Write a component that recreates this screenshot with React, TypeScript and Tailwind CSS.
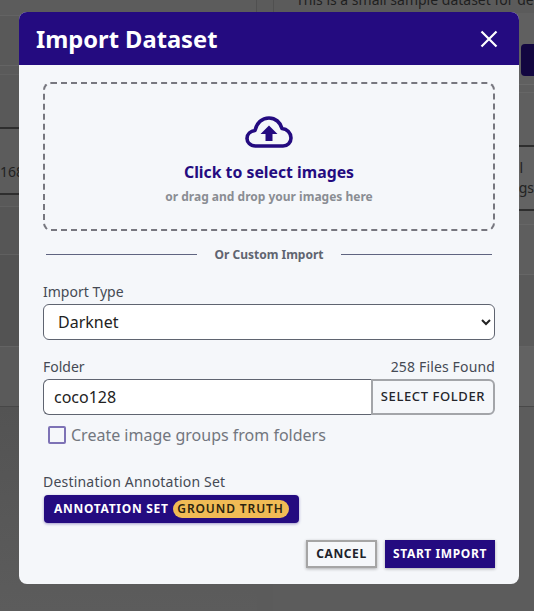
import React from "react";

const font = { fontFamily: '"Noto Sans", "Open Sans", sans-serif' };

function Backdrop() {
  return (
    <div className="flex h-full w-full bg-[#5b5b5b]">
      <div className="flex w-[257px] shrink-0 flex-col">
        <div className="h-[16px] border-b border-r border-b-[#636363] border-r-[#505050] bg-[#5c5c5c]" />
        <div className="h-[50px] border-b border-b-[#646464] bg-[#595959]" />
        <div className="h-[9px] border-b border-b-[#606060] bg-[#5a5a5a]" />
        <div className="h-[54px] border-b-2 border-b-[#2e2e2e] bg-[#595959]" />
        <div className="flex h-[66px] items-center border-b-2 border-b-[#2e2e2e] bg-[#5c5c5c] pt-[20px] text-[14px] text-[#222]">168</div>
        <div className="h-[12px] border-b border-b-[#606060] bg-[#595959]" />
        <div className="h-[48px] border-b border-b-[#606060] bg-[#565656]" />
        <div className="h-[92px] border-b border-b-[#636363] bg-[#535353]" />
        <div className="h-[60px] border-b border-b-[#474747] bg-[#5a5a5a]" />
        <div className="flex-1 bg-linear-to-b from-[#535353] to-[#5c5c5c]" />
      </div>
      <div className="w-[16px] shrink-0" />
      <div className="flex flex-1 flex-col">
        <div className="h-[13px] overflow-hidden whitespace-nowrap border-l border-l-[#505050] pl-[22px]">
          <div className="mt-[-10px] text-[14px] leading-[20px] text-[#1f1f1f]">This is a small sample dataset for de</div>
        </div>
        <div className="flex h-[72px] justify-end border-b border-b-[#696969] bg-[#606060] pt-[31px]">
          <div className="mr-[-8px] h-[32px] w-[21px] rounded-[4px] bg-[#120640]" />
        </div>
        <div className="h-[8px] border-b border-b-[#666] bg-[#5e5e5e]" />
        <div className="h-[54px] border-b-2 border-b-[#2e2e2e] bg-[#5f5f5f]" />
        <div className="flex h-[64px] flex-col items-end justify-center border-b-2 border-b-[#2e2e2e] bg-[#636363] text-[14px] leading-[20px] text-[#222]">
          <span className="pr-[11px]">l</span>
          <span>gs</span>
        </div>
        <div className="h-[14px] border-b border-b-[#666] bg-[#5f5f5f]" />
        <div className="h-[50px] border-b border-b-[#666] bg-[#5e5e5e]" />
        <div className="h-[72px] border-b border-b-[#646464] bg-[#5a5a5a]" />
        <div className="h-[60px] border-b border-b-[#494949] bg-[#626262]" />
        <div className="flex-1 bg-[#5c5c5c]" />
      </div>
    </div>
  );
}

export default function App() {
  return (
    <div className="relative h-[611px] w-[534px] overflow-hidden" style={font}>
      <Backdrop />
      <div className="absolute left-[19px] top-[12px] w-[500px] overflow-hidden rounded-[8px] bg-[#f5f7fa]">
        <div className="flex h-[53px] items-center justify-between bg-[#240b80] pl-[17px] pr-[20px]">
          <h2 className="text-[23.7px] font-bold leading-[32px] text-white">Import Dataset</h2>
          <svg width="20" height="20" viewBox="0 0 20 20" fill="none" stroke="white" strokeWidth="2.2">
            <path d="M2.5 2.5 L17.5 17.5 M17.5 2.5 L2.5 17.5" />
          </svg>
        </div>

        <div className="px-[24px] pb-[16px] pt-[17px]">
          <div className="flex h-[149px] flex-col items-center rounded-[8px] border-2 border-dashed border-[#77777f] pt-[32px]">
            <svg width="48" height="32" viewBox="0 0 48 32" fill="none">
              <path
                d="M10.5 30 C5 30 2 26 2 22.5 C2 18 5.5 15 10 14.5 C11.5 7 17 2 24 2 C30.5 2 35.5 6.5 37 12.5 C42 13 46 17 46 22 C46 26.5 42.5 30 38 30 Z"
                stroke="#240b80"
                strokeWidth="3.6"
                strokeLinejoin="round"
              />
              <path d="M24 9.5 L32.5 18 L27.5 18 L27.5 25 L20.5 25 L20.5 18 L15.5 18 Z" fill="#240b80" />
            </svg>
            <div className="mt-[13px] text-[15.8px] font-bold leading-[22px] text-[#240b80]">Click to select images</div>
            <div className="mt-[6px] text-[12px] font-bold leading-[16px] text-[#8a8d93]">or drag and drop your images here</div>
          </div>

          <div className="mt-[15px] flex h-[17px] items-start pl-[3px] pr-[3px]">
            <div className="mt-[8px] h-px w-[151px] bg-[#5f6480]" />
            <div className="mt-px flex-1 text-center text-[12px] font-bold leading-[16px] text-[#5f6470]">Or Custom Import</div>
            <div className="mt-[8px] h-px w-[151px] bg-[#5f6480]" />
          </div>

          <label className="mt-[20px] block text-[14px] leading-[18px] text-[#454a54]">Import Type</label>
          <select
            defaultValue="Darknet"
            className="mt-[3px] block h-[36px] w-full rounded-[6px] border border-[#5f6470] bg-white pl-[10px] pr-[4px] text-[16px] text-[#222]"
          >
            <option>Darknet</option>
          </select>

          <div className="mt-[18px] flex items-center justify-between text-[14px] leading-[18px] text-[#454a54]">
            <span>Folder</span>
            <span className="tracking-[0.15px]">258 Files Found</span>
          </div>
          <div className="mt-[3px] flex h-[36px]">
            <input
              readOnly
              value="coco128"
              className="h-full min-w-0 flex-1 rounded-l-[6px] border border-r-0 border-[#5f6470] bg-white pl-[10px] text-[16px] text-[#222] outline-none"
            />
            <button className="h-full w-[124px] rounded-r-[6px] border-2 border-[#a3a5a9] bg-[#f5f7fa] text-[13px] font-medium tracking-[0.6px] text-[#23252b]">
              SELECT FOLDER
            </button>
          </div>

          <label className="mt-[10px] flex h-[20px] items-center pl-[5px]">
            <span className="h-[18px] w-[18px] rounded-[2px] border-2 border-[#7d72b5] bg-[#f5f7fa]" />
            <span className="ml-[5px] text-[16px] leading-[20px] text-[#72767e]">Create image groups from folders</span>
          </label>

          <div className="mt-[28px] text-[14px] leading-[18px] tracking-[0.2px] text-[#454a54]">Destination Annotation Set</div>
          <div className="mt-[4px] flex">
            <button className="ml-px flex h-[28px] w-[255px] items-center rounded-[4px] bg-[#240b80] pl-[10px] text-[12px] font-bold tracking-[0.7px] text-white shadow-[0_1px_3px_rgba(36,11,128,0.4)]">
              ANNOTATION SET
              <span className="ml-[4px] flex h-[18px] w-[116px] items-center justify-center rounded-full bg-[#f0bb55] text-[12px] font-semibold tracking-[0.9px] text-[#2b2410]">
                GROUND TRUTH
              </span>
            </button>
          </div>

          <div className="mt-[17px] flex justify-end gap-[8px]">
            <button className="h-[28px] w-[71px] border-2 border-[#a5a5a5] bg-[#f5f7fa] text-[12px] font-bold tracking-[0.6px] text-[#20222a] shadow-[0_1px_3px_rgba(0,0,0,0.3)]">
              CANCEL
            </button>
            <button className="h-[28px] w-[110px] bg-[#240b80] text-[12px] font-bold tracking-[0.6px] text-white shadow-[0_1px_3px_rgba(0,0,0,0.3)]">
              START IMPORT
            </button>
          </div>
        </div>
      </div>
    </div>
  );
}
